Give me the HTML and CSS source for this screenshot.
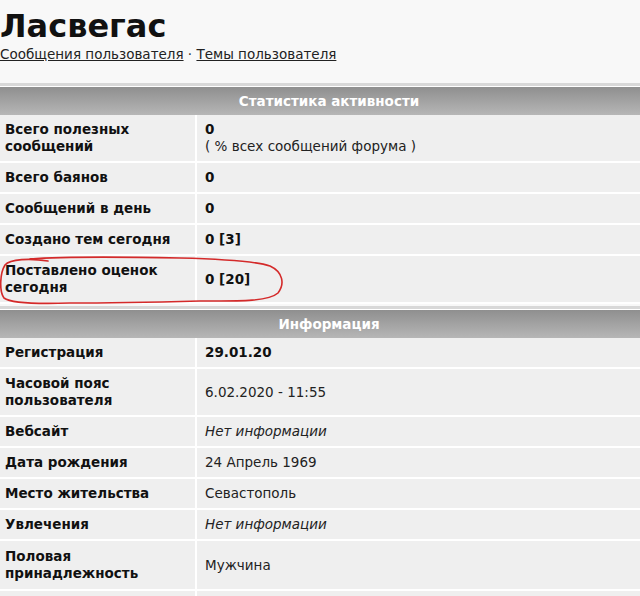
FILE: index.html
```html
<!DOCTYPE html>
<html lang="ru">
<head>
  <meta charset="UTF-8">
  <title>Ласвегас - профиль</title>
  <link rel="stylesheet" href="styles.css">
</head>
<body>
  <!-- Шапка профиля -->
  <h1 class="username">Ласвегас</h1>
  <div class="user-links">
    <a href="#">Сообщения пользователя</a> · <a href="#">Темы пользователя</a>
  </div>

  <!-- Статистика -->
  <div class="profile-block stats">
    <table class="info-table">
      <tr><th colspan="2">Статистика активности</th></tr>
      <tr>
        <td class="label">Всего полезных сообщений</td>
        <td class="value"><b>0</b><br>( % всех сообщений форума )</td>
      </tr>
      <tr>
        <td class="label">Всего баянов</td>
        <td class="value"><b>0</b></td>
      </tr>
      <tr>
        <td class="label">Сообщений в день</td>
        <td class="value"><b>0</b></td>
      </tr>
      <tr>
        <td class="label">Создано тем сегодня</td>
        <td class="value"><b>0 [3]</b></td>
      </tr>
      <tr>
        <td class="label">Поставлено оценок сегодня</td>
        <td class="value"><b>0 [20]</b></td>
      </tr>
    </table>
    <!-- пометка от руки -->
    <svg class="scribble" width="290" height="56" viewBox="0 0 290 56">
      <path d="M30 5 C 70 2, 130 3, 180 4 C 220 5, 255 7, 270 12 C 283 18, 285 30, 278 39 C 268 48, 235 47, 200 47 C 160 48, 110 49, 70 49 C 40 50, 12 50, 4 44 C -1 37, 0 19, 5 11 C 10 5, 30 4, 48 7"
            fill="none" stroke="#d42a2a" stroke-width="1.6" stroke-linecap="round"/>
    </svg>
  </div>

  <!-- Информация -->
  <div class="profile-block">
    <table class="info-table">
      <tr><th colspan="2">Информация</th></tr>
      <tr>
        <td class="label">Регистрация</td>
        <td class="value"><b>29.01.20</b></td>
      </tr>
      <tr>
        <td class="label">Часовой пояс пользователя</td>
        <td class="value">6.02.2020 - 11:55</td>
      </tr>
      <tr>
        <td class="label">Вебсайт</td>
        <td class="value"><i>Нет информации</i></td>
      </tr>
      <tr>
        <td class="label">Дата рождения</td>
        <td class="value">24 Апрель 1969</td>
      </tr>
      <tr>
        <td class="label">Место жительства</td>
        <td class="value">Севастополь</td>
      </tr>
      <tr>
        <td class="label">Увлечения</td>
        <td class="value"><i>Нет информации</i></td>
      </tr>
      <tr class="tall">
        <td class="label">Половая принадлежность</td>
        <td class="value">Мужчина</td>
      </tr>
      <tr>
        <td class="label">&nbsp;</td>
        <td class="value">&nbsp;</td>
      </tr>
    </table>
  </div>
</body>
</html>
```

FILE: styles.css
```css
html {
  overflow: hidden;
}
body {
  margin: 0;
  background-color: #f8f8f8;
  font-family: "DejaVu Sans", Verdana, sans-serif;
  font-size: 13.5px;
  color: #111;
}
.username {
  margin: 0;
  padding: 6px 0 0 0;
  font-size: 32px;
  line-height: 40px;
  font-weight: bold;
}
.user-links {
  line-height: 17px;
  color: #333;
}
.user-links a {
  color: #222;
  text-decoration: underline;
}
.profile-block {
  position: relative;
  margin-top: 20px;
}
.profile-block + .profile-block {
  margin-top: 2px;
}
.stats {
  z-index: 2;
}
.info-table {
  width: 658px;
  border-collapse: separate;
  border-spacing: 0;
  border-top: 3px solid #d8d8d8;
}
.info-table th {
  height: 28px;
  padding: 0;
  border-top: 1px solid #fff;
  background: linear-gradient(to bottom, #8f8f8f, #b6b6b6);
  color: #fff;
  font-weight: bold;
  text-align: center;
}
.info-table td {
  background-color: #efefef;
  line-height: 17px;
  padding: 6px 5px 6px 5px;
  border-bottom: 2px solid #fff;
  vertical-align: middle;
}
.info-table .tall td {
  padding-top: 7px;
  padding-bottom: 7px;
}
.label {
  width: 185px;
  font-weight: bold;
  border-right: 2px solid #fff;
}
.value {
  padding-left: 8px !important;
  color: #222;
}
.value b {
  color: #111;
}
.scribble {
  position: absolute;
  left: 0;
  top: 171px;
  overflow: visible;
}
```
